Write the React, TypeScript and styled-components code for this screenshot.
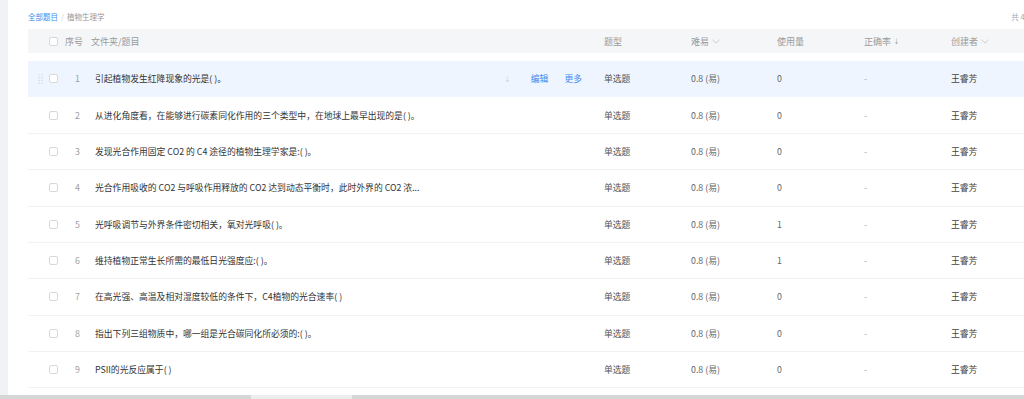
import styled, { createGlobalStyle } from "styled-components"

const GlobalStyle = createGlobalStyle`
  html, body {
    margin: 0;
    padding: 0;
    background: #ffffff;
    overflow: hidden;
  }
  body {
    font-family: "Noto Sans CJK SC", "Noto Sans", sans-serif;
  }
`

const COLS = "37px 26px 513px 87px 86px 87px 87px 100px"

const Page = styled.div`
  width: 1024px;
  height: 399px;
  display: flex;
  flex-direction: column;
  overflow: hidden;
`

const Main = styled.div`
  height: 395px;
  display: flex;
  overflow: hidden;
`

const SideStrip = styled.div`
  width: 8px;
  flex-shrink: 0;
  background: #f1f2f6;
`

const Panel = styled.div`
  width: 1060px;
  flex-shrink: 0;
  padding: 10px 0 0 20px;
  box-sizing: border-box;
  background: #ffffff;
`

const TopBar = styled.div`
  height: 13px;
  display: flex;
  align-items: center;
  justify-content: space-between;
  font-size: 7.5px;
  padding-right: 30px;
  margin-bottom: 6px;
`

const Crumbs = styled.div`
  display: flex;
  align-items: center;
  gap: 3px;
  color: #999;
`

const CrumbLink = styled.span`
  color: #3b8cf0;
`

const CrumbSep = styled.span`
  color: #d0d0d0;
`

const Total = styled.span`
  color: #aaa;
`

const HeaderRow = styled.div`
  display: grid;
  grid-template-columns: ${COLS};
  height: 24px;
  align-items: center;
  background: #f5f6f8;
  font-size: 9px;
  color: #9a9a9a;
  margin-bottom: 8px;
`

const Row = styled.div<{ $active?: boolean }>`
  display: grid;
  grid-template-columns: ${COLS};
  height: 36.375px;
  box-sizing: border-box;
  align-items: center;
  font-size: 8.8px;
  color: #333;
  background: ${(p) => (p.$active ? "#eef5fe" : "#ffffff")};
  border-bottom: 1px solid ${(p) => (p.$active ? "#eef5fe" : "#f2f2f2")};
`

const CheckCell = styled.div`
  display: flex;
  align-items: center;
  padding-left: 8px;
  gap: 5px;
`

const Grip = styled.div<{ $show?: boolean }>`
  width: 8px;
  display: flex;
  justify-content: center;
  visibility: ${(p) => (p.$show ? "visible" : "hidden")};
`

const Check = styled.span`
  width: 9px;
  height: 9px;
  box-sizing: border-box;
  border: 1px solid #d9d9d9;
  border-radius: 2px;
  background: #fff;
`

const NumCell = styled.div`
  color: #a0a0a0;
  padding-left: 10px;
`

const TitleCell = styled.div`
  display: flex;
  align-items: center;
  padding-left: 4px;
  padding-right: 22px;
  min-width: 0;
`

const TitleText = styled.span`
  flex: 1;
  white-space: nowrap;
  overflow: hidden;
`

const Actions = styled.div`
  display: flex;
  align-items: center;
  gap: 16px;
  color: #3b8cf0;
`

const Pin = styled.span`
  color: #c8d4e4;
  font-size: 8px;
  margin-right: 4px;
`

const Cell = styled.div<{ $tone?: string }>`
  color: ${(p) => p.$tone || "#555"};
  white-space: nowrap;
`

const HeadLabel = styled.div`
  display: flex;
  align-items: center;
  gap: 3px;
  white-space: nowrap;
`

const ScrollTrack = styled.div`
  height: 4px;
  background: #d6d6d6;
  display: flex;
`

const ScrollThumb = styled.div`
  margin-left: 251px;
  width: 101px;
  background: #ededed;
`

const Chevron = () => (
  <svg width="8" height="5" viewBox="0 0 8 5">
    <path d="M0.5 0.8 L4 4 L7.5 0.8" fill="none" stroke="#c4c4c4" strokeWidth="0.8" />
  </svg>
)

const SortIcon = () => (
  <svg width="5" height="7" viewBox="0 0 5 7">
    <path d="M2.5 0.5 V6" stroke="#c4c4c4" strokeWidth="0.8" />
    <path d="M0.8 4.2 L2.5 6.2 L4.2 4.2" fill="#b0b0b0" stroke="none" />
  </svg>
)

const GripIcon = () => (
  <svg width="5" height="10" viewBox="0 0 5 10">
    {[1, 3.7, 6.4, 9].map((y) => (
      <g key={y}>
        <rect x="0.3" y={y - 0.6} width="1.3" height="1.2" fill="#cfd6df" />
        <rect x="3.3" y={y - 0.6} width="1.3" height="1.2" fill="#cfd6df" />
      </g>
    ))}
  </svg>
)

const rows = [
  { title: "引起植物发生红降现象的光是( )。", use: "0" },
  { title: "从进化角度看，在能够进行碳素同化作用的三个类型中，在地球上最早出现的是( )。", use: "0" },
  { title: "发现光合作用固定 CO2 的 C4 途径的植物生理学家是:( )。", use: "0" },
  { title: "光合作用吸收的 CO2 与呼吸作用释放的 CO2 达到动态平衡时，此时外界的 CO2 浓...", use: "0" },
  { title: "光呼吸调节与外界条件密切相关，氧对光呼吸( )。", use: "1" },
  { title: "维持植物正常生长所需的最低日光强度应:( )。", use: "1" },
  { title: "在高光强、高温及相对湿度较低的条件下，C4植物的光合速率( )", use: "0" },
  { title: "指出下列三组物质中，哪一组是光合碳同化所必须的:( )。", use: "0" },
  { title: "PSII的光反应属于( )", use: "0" },
]

export default function App() {
  return (
    <Page>
      <GlobalStyle />
      <Main>
        <SideStrip />
        <Panel>
          <TopBar>
            <Crumbs>
              <CrumbLink>全部题目</CrumbLink>
              <CrumbSep>/</CrumbSep>
              <span>植物生理学</span>
            </Crumbs>
            <Total>共 45 题</Total>
          </TopBar>
          <HeaderRow>
            <CheckCell>
              <Grip />
              <Check />
            </CheckCell>
            <HeadLabel>序号</HeadLabel>
            <HeadLabel>文件夹/题目</HeadLabel>
            <HeadLabel>题型</HeadLabel>
            <HeadLabel>
              难易 <Chevron />
            </HeadLabel>
            <HeadLabel>使用量</HeadLabel>
            <HeadLabel>
              正确率 <SortIcon />
            </HeadLabel>
            <HeadLabel>
              创建者 <Chevron />
            </HeadLabel>
          </HeaderRow>
          {rows.map((r, i) => (
            <Row key={i} $active={i === 0}>
              <CheckCell>
                <Grip $show={i === 0}>
                  <GripIcon />
                </Grip>
                <Check />
              </CheckCell>
              <NumCell>{i + 1}</NumCell>
              <TitleCell>
                <TitleText>{r.title}</TitleText>
                {i === 0 && (
                  <Actions>
                    <Pin>⇣</Pin>
                    <span>编辑</span>
                    <span>更多</span>
                  </Actions>
                )}
              </TitleCell>
              <Cell>单选题</Cell>
              <Cell $tone="#666">0.8 (易)</Cell>
              <Cell $tone="#666">{r.use}</Cell>
              <Cell $tone="#aaa">-</Cell>
              <Cell $tone="#444">王睿芳</Cell>
            </Row>
          ))}
        </Panel>
      </Main>
      <ScrollTrack>
        <ScrollThumb />
      </ScrollTrack>
    </Page>
  )
}
